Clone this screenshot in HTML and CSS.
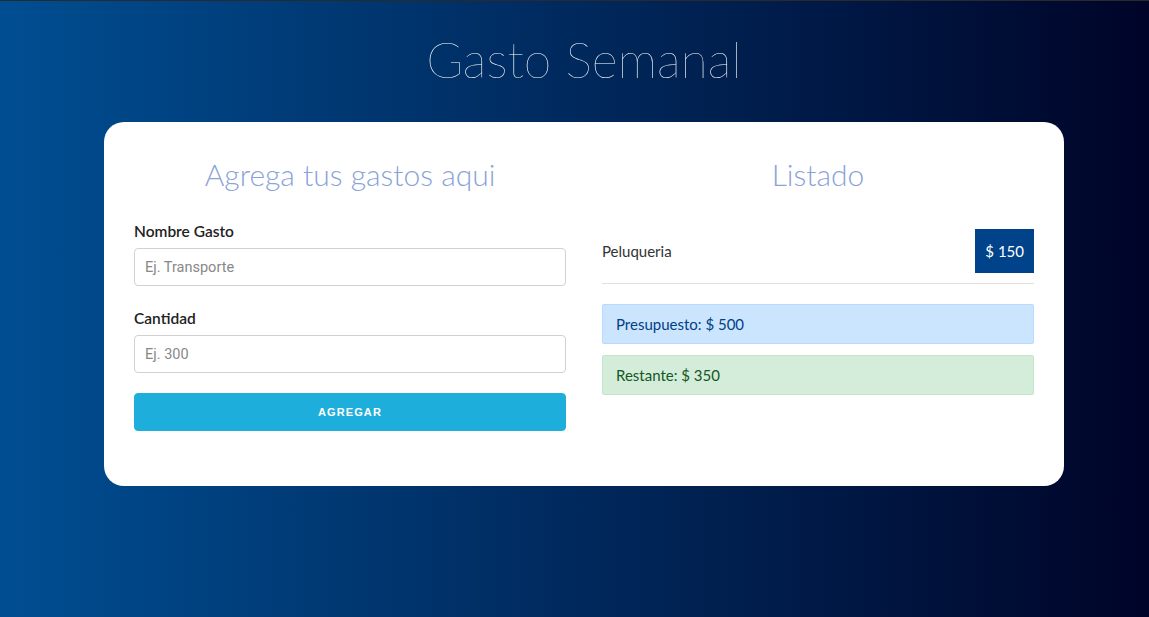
FILE: index.html
```html
<!DOCTYPE html>
<html lang="es">
<head>
<meta charset="utf-8">
<title>Gasto Semanal</title>
<link rel="stylesheet" href="styles.css">
</head>
<body>
<div class="page">
  <header class="header">
    <h1 class="title">Gasto Semanal</h1>
  </header>
  <main class="card">
    <section class="col">
      <h2 class="col-title">Agrega tus gastos aqui</h2>
      <form class="form">
        <label class="label" for="nombre">Nombre Gasto</label>
        <input class="input" id="nombre" type="text" placeholder="Ej. Transporte">
        <label class="label" for="cantidad">Cantidad</label>
        <input class="input" id="cantidad" type="text" placeholder="Ej. 300">
        <button class="button" type="button">Agregar</button>
      </form>
    </section>
    <section class="col">
      <h2 class="col-title">Listado</h2>
      <ul class="list">
        <li class="item">
          <span class="item-name">Peluqueria</span>
          <span class="badge">$ 150</span>
        </li>
      </ul>
      <div class="alert alert-primary">Presupuesto: $ 500</div>
      <div class="alert alert-success">Restante: $ 350</div>
    </section>
  </main>
</div>
</body>
</html>
```

FILE: styles.css
```css
* {
  box-sizing: border-box;
}

html, body {
  margin: 0;
  padding: 0;
  height: 100%;
}

body {
  font-family: "Lato", "Liberation Sans", sans-serif;
  font-size: 15px;
  color: #222;
  background: linear-gradient(to right, #004e92, #000428);
  border-top: 1px solid #2a2a2a;
}

.page {
  min-height: 100%;
  padding-left: 19px;
}

.header {
  padding-top: 28px;
  margin-bottom: 33px;
  text-align: center;
}

.title {
  margin: 0;
  font-size: 50px;
  line-height: 60px;
  font-weight: 200;
  color: #fff;
  letter-spacing: 0;
}

.card {
  width: 960px;
  margin: 0 auto;
  background: #fff;
  border-radius: 20px;
  padding: 30px 30px 55px;
  display: grid;
  grid-template-columns: 432px 432px;
  column-gap: 36px;
  align-items: start;
}

.col-title {
  margin: 0;
  text-align: center;
  font-size: 30px;
  line-height: 44px;
  font-weight: 300;
  color: #8aa3d8;
}

.form {
  display: flex;
  flex-direction: column;
  margin-top: 23px;
}

.label {
  font-weight: 600;
  font-size: 15.5px;
  line-height: 24px;
  margin-bottom: 5px;
  color: #222;
}

.input {
  height: 38px;
  width: 100%;
  padding: 6px 10px;
  border: 1px solid #d1d1d1;
  border-radius: 4px;
  background: #fff;
  font-family: "Roboto", "Liberation Sans", sans-serif;
  font-size: 14.5px;
  margin-bottom: 20px;
  outline: none;
}

.input::placeholder {
  color: #888;
}

.button {
  height: 38px;
  width: 100%;
  border: 1px solid #1eaedb;
  border-radius: 4px;
  background: #1eaedb;
  color: #fff;
  font-family: "Liberation Sans", sans-serif;
  font-size: 11px;
  font-weight: 700;
  letter-spacing: 1.1px;
  text-transform: uppercase;
  padding: 0 30px;
}

.list {
  list-style: none;
  margin: 33px 0 0;
  padding: 0;
}

.item {
  display: flex;
  justify-content: space-between;
  align-items: center;
  padding-bottom: 10px;
  border-bottom: 1px solid #e1e1e1;
}

.item-name {
  color: #333;
}

.badge {
  background: #00438a;
  color: #fff;
  padding: 10px;
  line-height: 24px;
}

.alert {
  border: 1px solid transparent;
  border-radius: 2px;
  padding: 7px 13px;
  line-height: 24px;
}

.alert-primary {
  margin-top: 20px;
  background: #cce5ff;
  border-color: #b8daff;
  color: #004085;
}

.alert-success {
  margin-top: 11px;
  background: #d4edda;
  border-color: #c3e6cb;
  color: #155724;
}
```
